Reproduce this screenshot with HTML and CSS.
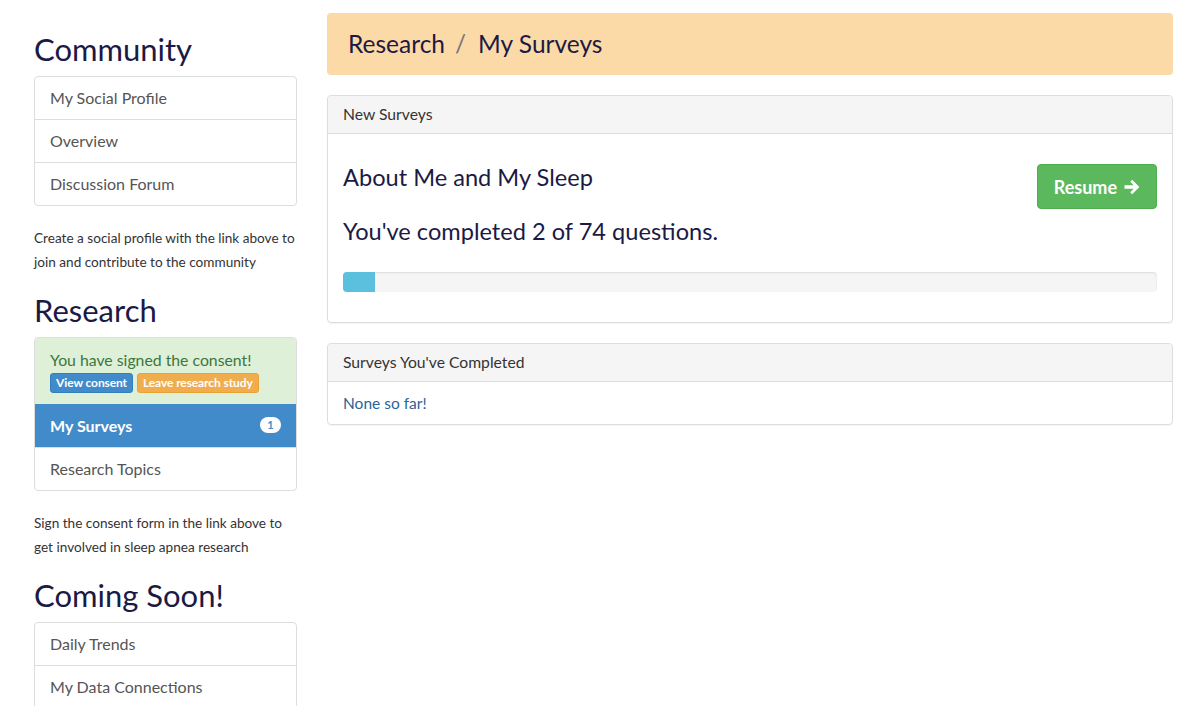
FILE: index.html
```html
<!DOCTYPE html>
<html>
<head>
<meta charset="utf-8">
<link rel="stylesheet" href="styles.css">
</head>
<body>
<div class="page">
  <aside class="sidebar">
    <h2 class="side-title">Community</h2>
    <div class="list-group">
      <a class="list-item">My Social Profile</a>
      <a class="list-item">Overview</a>
      <a class="list-item">Discussion Forum</a>
    </div>
    <p class="side-note">Create a social profile with the link above to join and contribute to the community</p>

    <h2 class="side-title">Research</h2>
    <div class="list-group">
      <div class="list-item consent">
        <div class="consent-text">You have signed the consent!</div>
        <div class="consent-btns">
          <span class="btn-xs btn-blue">View consent</span>
          <span class="btn-xs btn-orange">Leave research study</span>
        </div>
      </div>
      <a class="list-item active">My Surveys <span class="badge">1</span></a>
      <a class="list-item">Research Topics</a>
    </div>
    <p class="side-note">Sign the consent form in the link above to get involved in sleep apnea research</p>

    <h2 class="side-title">Coming Soon!</h2>
    <div class="list-group">
      <a class="list-item">Daily Trends</a>
      <a class="list-item">My Data Connections</a>
    </div>
  </aside>

  <main class="content">
    <div class="breadcrumb">
      <span>Research</span><span class="sep">/</span><span>My Surveys</span>
    </div>

    <div class="panel">
      <div class="panel-heading">New Surveys</div>
      <div class="panel-body survey-body">
        <div class="survey-top">
          <div>
            <h3 class="survey-title">About Me and My Sleep</h3>
            <h3 class="survey-progress">You've completed 2 of 74 questions.</h3>
          </div>
          <span class="btn-resume">Resume
            <svg width="18" height="18" viewBox="0 0 18 18"><path d="M1.5 7.3h9.2L7.2 3.8 9.2 1.8 16.4 9 9.2 16.2 7.2 14.2l3.5-3.5H1.5z" fill="#fff"/></svg>
          </span>
        </div>
        <div class="progress"><div class="progress-bar" style="width:32px"></div></div>
      </div>
    </div>

    <div class="panel">
      <div class="panel-heading">Surveys You've Completed</div>
      <div class="panel-body none-body">None so far!</div>
    </div>
  </main>
</div>
</body>
</html>
```

FILE: styles.css
```css
* { box-sizing: border-box; }
html, body { margin: 0; padding: 0; background: #fff; }
body {
  font-family: Lato, "Open Sans", "Liberation Sans", sans-serif;
  color: #333;
  font-size: 14px;
}
.page {
  display: flex;
  gap: 30px;
  padding: 13px 6px 0 34px;
  align-items: flex-start;
}
.sidebar { width: 263px; flex: none; }
.side-title {
  font-size: 31px;
  font-weight: 400;
  color: #1b1a45;
  margin: 16px 0 7px;
  line-height: 40px;
}
.list-group {
  border: 1px solid #ddd;
  border-radius: 4px;
  overflow: hidden;
}
.list-item {
  display: block;
  padding: 10px 15px;
  line-height: 22px;
  font-size: 16px;
  color: #555;
  border-top: 1px solid #ddd;
  position: relative;
}
.list-item:first-child { border-top: none; }
.list-item.active {
  background: #428bca;
  color: #fff;
  font-weight: 700;
  border-top-color: #428bca;
}
.badge {
  position: absolute;
  right: 15px;
  top: 12px;
  background: #fff;
  color: #428bca;
  font-size: 11px;
  font-weight: 700;
  line-height: 16px;
  min-width: 21px;
  text-align: center;
  border-radius: 10px;
  padding: 0 6px;
}
.consent {
  background: #dff0d8;
  color: #3c763d;
  padding: 11px 15px 11px;
}
.consent-text { line-height: 22px; font-size: 15.8px; }
.consent-btns { display: flex; gap: 4px; margin-top: 2px; }
.btn-xs {
  display: inline-block;
  font-size: 12px;
  font-weight: 700;
  color: #fff;
  line-height: 18px;
  padding: 0 5px;
  border-radius: 3px;
  letter-spacing: -0.1px;
}
.btn-blue { background: #428bca; border: 1px solid #357ebd; }
.btn-orange { background: #f0ad4e; border: 1px solid #eea236; }
.side-note {
  font-size: 13.6px;
  line-height: 24px;
  color: #333;
  margin: 20px 0 0;
}

.content { flex: 1; min-width: 0; }
.breadcrumb {
  background: #fcdaa8;
  border-radius: 4px;
  padding: 14px 21px 15px;
  font-size: 24.5px;
  line-height: 33px;
  color: #1b1a45;
  margin-bottom: 20px;
}
.breadcrumb .sep { color: #777; padding: 0 12px 0 10px; }

.panel {
  border: 1px solid #ddd;
  border-radius: 4px;
  margin-bottom: 20px;
  box-shadow: 0 1px 1px rgba(0,0,0,.05);
  overflow: hidden;
}
.panel-heading {
  background: #f5f5f5;
  border-bottom: 1px solid #ddd;
  padding: 9px 15px;
  font-size: 15.7px;
  line-height: 19px;
  color: #333;
}
.panel-body { padding: 15px; }
.survey-body { padding: 28px 15px 30px; }
.survey-top { display: flex; justify-content: space-between; align-items: flex-start; }
.survey-title, .survey-progress {
  font-size: 23.6px;
  font-weight: 400;
  color: #1b1a45;
  margin: 0;
  line-height: 30px;
}
.survey-progress { margin-top: 24px; }
.btn-resume {
  display: inline-flex;
  align-items: center;
  gap: 6px;
  background: #5cb85c;
  border: 1px solid #4cae4c;
  border-radius: 4px;
  color: #fff;
  font-size: 18px;
  font-weight: 700;
  height: 45px;
  padding: 0 15px 0 16px;
  margin-top: 2px;
}
.progress {
  margin-top: 26px;
  height: 20px;
  background: #f5f5f5;
  border-radius: 4px;
  box-shadow: inset 0 1px 2px rgba(0,0,0,.1);
  overflow: hidden;
}
.progress-bar { height: 100%; background: #5bc0de; }
.none-body {
  color: #2a6496;
  font-size: 15.5px;
  padding: 12px 15px 11px;
  line-height: 19px;
}
```
